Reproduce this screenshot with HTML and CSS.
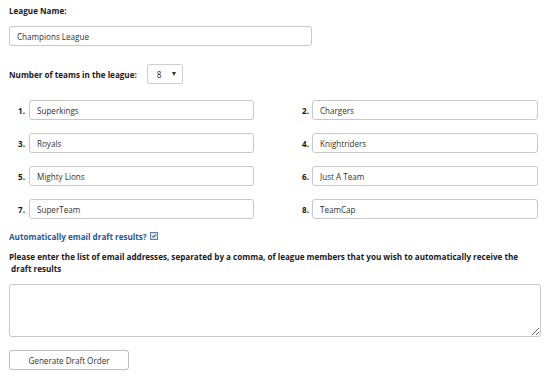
FILE: index.html
```html
<!DOCTYPE html>
<html>
<head>
<meta charset="utf-8">
<link rel="stylesheet" href="styles.css">
</head>
<body>
<form class="page">
  <div class="label-bold title">League Name:</div>
  <input class="text-input league" type="text" value="Champions League">

  <div class="teams-count">
    <span class="label-bold">Number of teams in the league:</span>
    <span class="select-wrap">
      <select class="select">
        <option>8</option>
      </select>
    </span>
  </div>

  <div class="teams">
    <div class="team"><span class="num">1.</span><input class="text-input" type="text" value="Superkings"></div>
    <div class="team right"><span class="num">2.</span><input class="text-input" type="text" value="Chargers"></div>
    <div class="team"><span class="num">3.</span><input class="text-input" type="text" value="Royals"></div>
    <div class="team right"><span class="num">4.</span><input class="text-input" type="text" value="Knightriders"></div>
    <div class="team"><span class="num">5.</span><input class="text-input" type="text" value="Mighty Lions"></div>
    <div class="team right"><span class="num">6.</span><input class="text-input" type="text" value="Just A Team"></div>
    <div class="team"><span class="num">7.</span><input class="text-input" type="text" value="SuperTeam"></div>
    <div class="team right"><span class="num">8.</span><input class="text-input" type="text" value="TeamCap"></div>
  </div>

  <label class="auto-email">
    <span class="auto-text">Automatically email draft results?</span>
    <span class="check" role="checkbox" aria-checked="true">
      <svg width="8" height="8" viewBox="0 0 8 8"><path d="M2 4.2 L3.4 5.8 L6.2 2" fill="none" stroke="#222" stroke-width="1.3"/></svg>
    </span>
  </label>

  <p class="label-bold instructions">Please enter the list of email addresses, separated by a comma, of league members that you wish to automatically receive the<br>&nbsp;draft results</p>

  <textarea class="emails"></textarea>

  <button type="button" class="btn">Generate Draft Order</button>
</form>
</body>
</html>
```

FILE: styles.css
```css
html, body {
  margin: 0;
  padding: 0;
  background: #fff;
}
body {
  font-family: "Open Sans", "Noto Sans", sans-serif;
  font-size: 8.1px;
  color: #333;
}
.page {
  padding: 5px 9px 0 9px;
  display: flex;
  flex-direction: column;
  align-items: flex-start;
}
.label-bold {
  font-weight: bold;
  color: #1a1a1a;
}
.title {
  line-height: 12px;
  height: 12px;
}
.text-input {
  box-sizing: border-box;
  height: 20px;
  border: 1px solid #c8c8c8;
  border-radius: 3px;
  padding: 0 7px;
  font-family: "Open Sans", "Noto Sans", sans-serif;
  font-size: 8.1px;
  color: #333;
  background: #fff;
  outline: none;
}
.league {
  width: 303px;
  margin-top: 9px;
}
.teams-count {
  margin-top: 18px;
  display: flex;
  align-items: center;
  gap: 10px;
  height: 20px;
}
.select-wrap {
  position: relative;
  display: inline-block;
}
.select {
  appearance: none;
  -webkit-appearance: none;
  box-sizing: border-box;
  width: 36px;
  height: 20px;
  border: 1px solid #cfcfcf;
  border-radius: 2px;
  padding: 0 0 0 9px;
  background: #fff;
  font-family: "Open Sans", "Noto Sans", sans-serif;
  font-size: 8.1px;
  color: #222;
  outline: none;
}
.select-wrap::after {
  content: "";
  position: absolute;
  right: 7px;
  top: 8px;
  border-left: 2.5px solid transparent;
  border-right: 2.5px solid transparent;
  border-top: 4px solid #333;
  pointer-events: none;
}
.teams {
  margin-top: 16px;
  display: grid;
  grid-template-columns: 245px 246px;
  column-gap: 38px;
  row-gap: 13px;
}
.team {
  display: flex;
  align-items: center;
}
.num {
  width: 20px;
  box-sizing: border-box;
  padding-right: 4px;
  text-align: right;
  font-weight: bold;
  color: #1a1a1a;
}
.team.right .num {
  padding-right: 3px;
}
.team .text-input {
  flex: 1;
  width: 0;
  min-width: 0;
  padding: 0 7px;
}
.auto-email {
  margin-top: 11px;
  display: flex;
  align-items: center;
  height: 12px;
}
.auto-text {
  color: #1c5a98;
  font-weight: bold;
}
.check {
  margin-left: 3px;
  box-sizing: border-box;
  width: 8px;
  height: 8px;
  border: 1px solid #5b7fa8;
  background: #dfe8f2;
  display: inline-flex;
  align-items: center;
  justify-content: center;
}
.check svg {
  display: block;
  width: 6px;
  height: 6px;
}
.instructions {
  margin: 9px 0 0 0;
  line-height: 12px;
}
.emails {
  box-sizing: border-box;
  margin-top: 9px;
  width: 532px;
  height: 53px;
  border: 1px solid #c8c8c8;
  border-radius: 3px;
  background: #fff;
  outline: none;
}
.btn {
  margin-top: 13px;
  box-sizing: border-box;
  width: 120px;
  height: 20px;
  border: 1px solid #bdbdbd;
  border-radius: 3px;
  background: #fff;
  font-family: "Open Sans", "Noto Sans", sans-serif;
  font-size: 8.1px;
  color: #333;
  padding: 0;
}
```
